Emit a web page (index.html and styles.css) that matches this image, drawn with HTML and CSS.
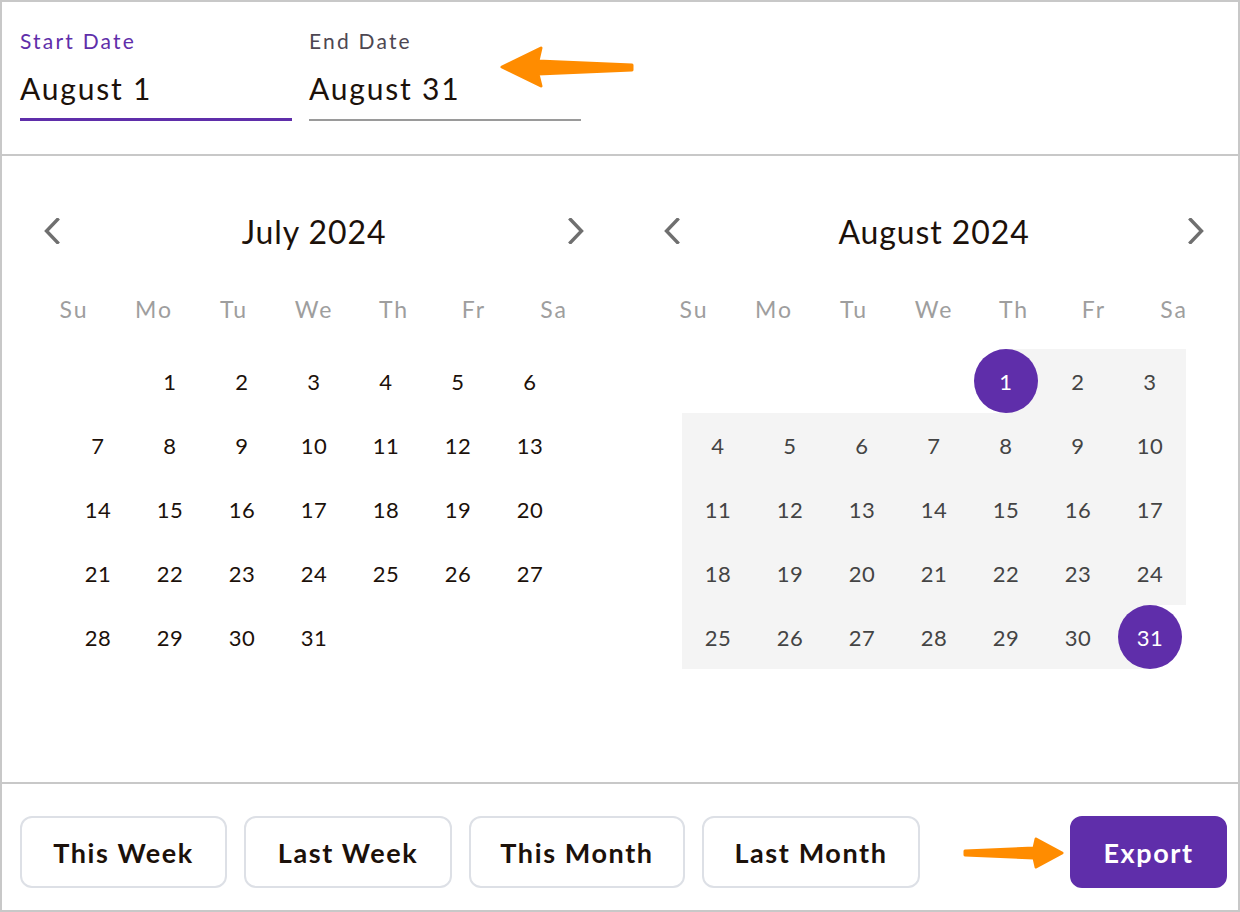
FILE: index.html
```html
<!DOCTYPE html>
<html lang="en">

<head>
    <meta charset="UTF-8">
    <title>Date Range Export</title>
    <link rel="stylesheet" href="styles.css">
</head>

<body>
    <div class="picker">
        <div class="fields">
            <div class="field active">
                <div class="label">Start Date</div>
                <div class="value">August 1</div>
            </div>
            <div class="field">
                <div class="label">End Date</div>
                <div class="value">August 31</div>
            </div>
        </div>

        <div class="calendars">
            <div class="month">
                <div class="month-head">
                    <svg class="chev" width="16" height="26" viewBox="0 0 16 26"><polyline points="13.5,1.5 2.5,13 13.5,24.5" /></svg>
                    <span class="title">July 2024</span>
                    <svg class="chev" width="16" height="26" viewBox="0 0 16 26"><polyline points="2.5,1.5 13.5,13 2.5,24.5" /></svg>
                </div>
                <div class="weekdays">
                    <span>Su</span><span>Mo</span><span>Tu</span><span>We</span><span>Th</span><span>Fr</span><span>Sa</span>
                </div>
                <div class="days">
                    <span class="day"></span>
                    <span class="day">1</span><span class="day">2</span><span class="day">3</span><span class="day">4</span><span class="day">5</span><span class="day">6</span>
                    <span class="day">7</span><span class="day">8</span><span class="day">9</span><span class="day">10</span><span class="day">11</span><span class="day">12</span><span class="day">13</span>
                    <span class="day">14</span><span class="day">15</span><span class="day">16</span><span class="day">17</span><span class="day">18</span><span class="day">19</span><span class="day">20</span>
                    <span class="day">21</span><span class="day">22</span><span class="day">23</span><span class="day">24</span><span class="day">25</span><span class="day">26</span><span class="day">27</span>
                    <span class="day">28</span><span class="day">29</span><span class="day">30</span><span class="day">31</span>
                </div>
            </div>

            <div class="month">
                <div class="month-head">
                    <svg class="chev" width="16" height="26" viewBox="0 0 16 26"><polyline points="13.5,1.5 2.5,13 13.5,24.5" /></svg>
                    <span class="title">August 2024</span>
                    <svg class="chev" width="16" height="26" viewBox="0 0 16 26"><polyline points="2.5,1.5 13.5,13 2.5,24.5" /></svg>
                </div>
                <div class="weekdays">
                    <span>Su</span><span>Mo</span><span>Tu</span><span>We</span><span>Th</span><span>Fr</span><span>Sa</span>
                </div>
                <div class="days">
                    <span class="day"></span><span class="day"></span><span class="day"></span><span class="day"></span>
                    <span class="day range start"><b>1</b></span><span class="day range">2</span><span class="day range">3</span>
                    <span class="day range">4</span><span class="day range">5</span><span class="day range">6</span><span class="day range">7</span><span class="day range">8</span><span class="day range">9</span><span class="day range">10</span>
                    <span class="day range">11</span><span class="day range">12</span><span class="day range">13</span><span class="day range">14</span><span class="day range">15</span><span class="day range">16</span><span class="day range">17</span>
                    <span class="day range">18</span><span class="day range">19</span><span class="day range">20</span><span class="day range">21</span><span class="day range">22</span><span class="day range">23</span><span class="day range">24</span>
                    <span class="day range">25</span><span class="day range">26</span><span class="day range">27</span><span class="day range">28</span><span class="day range">29</span><span class="day range">30</span>
                    <span class="day range end"><b>31</b></span>
                </div>
            </div>
        </div>

        <div class="actions">
            <button class="btn w-207">This Week</button>
            <button class="btn w-208">Last Week</button>
            <button class="btn w-216">This Month</button>
            <button class="btn w-218">Last Month</button>
            <button class="btn export">Export</button>
        </div>

        <!-- annotation arrows -->
        <svg class="arrow arrow-top" width="138" height="44" viewBox="0 0 138 44">
            <polygon points="4,22 43,3 40,16 134,20 134,25 40,29 43,41" />
        </svg>
        <svg class="arrow arrow-bottom" width="104" height="34" viewBox="0 0 104 34">
            <polygon points="3,15 72,12 74,3 100,17 74,31 72,22 3,19" />
        </svg>
    </div>
</body>

</html>
```

FILE: styles.css
```css
* {
    box-sizing: border-box;
}

body {
    margin: 0;
    background: #fff;
    font-family: 'Lato', 'Open Sans', sans-serif;
    color: #1c110a;
}

.picker {
    position: relative;
    width: 1240px;
    height: 912px;
    border: 2px solid #c8c8c8;
    display: flex;
    flex-direction: column;
}

/* date inputs */
.fields {
    height: 154px;
    flex-shrink: 0;
    display: flex;
    align-items: flex-start;
    gap: 17px;
    padding: 27px 18px 0;
    border-bottom: 2px solid #c8c8c8;
}

.field {
    width: 272px;
    padding-bottom: 13px;
    border-bottom: 2px solid #9a9a9a;
}

.field.active {
    padding-bottom: 12px;
    border-bottom: 3px solid #5f2eaa;
}

.label {
    font-size: 21px;
    line-height: 24px;
    letter-spacing: 2.2px;
    color: #4d4752;
}

.field.active .label {
    color: #5f2eaa;
}

.value {
    margin-top: 17px;
    font-size: 30px;
    line-height: 36px;
    letter-spacing: 1.8px;
    color: #1c110a;
}

/* calendars */
.calendars {
    flex: 1;
    display: flex;
    gap: 20px;
    padding: 40px 0 0 12px;
    border-bottom: 2px solid #c8c8c8;
}

.month {
    width: 600px;
}

.month-head {
    height: 70px;
    display: flex;
    align-items: center;
    justify-content: space-between;
    padding: 0 30px;
}

.chev polyline {
    fill: none;
    stroke: #6f6f6f;
    stroke-width: 3.4;
    stroke-linecap: square;
}

.title {
    font-size: 32px;
    letter-spacing: 0.9px;
    color: #1c110a;
}

.weekdays {
    display: grid;
    grid-template-columns: repeat(7, 80px);
    margin: 21px 20px 0;
    height: 44px;
    line-height: 44px;
    text-align: center;
    font-size: 23px;
    letter-spacing: 2px;
    color: #9e9e9e;
}

.days {
    display: grid;
    grid-template-columns: repeat(7, 72px);
    grid-auto-rows: 64px;
    margin: 18px 48px 0;
}

.day {
    display: flex;
    align-items: center;
    justify-content: center;
    font-size: 22px;
    letter-spacing: 0.5px;
    color: #1c110a;
}

.day.range {
    background: #f4f4f4;
    color: #444;
}

.day.start {
    background: linear-gradient(to right, transparent 50%, #f4f4f4 50%);
}

.day.end {
    background: linear-gradient(to right, #f4f4f4 50%, transparent 50%);
}

.day b {
    width: 64px;
    height: 64px;
    border-radius: 50%;
    background: #5f2eaa;
    color: #fff;
    font-weight: 400;
    display: flex;
    align-items: center;
    justify-content: center;
}

/* bottom buttons */
.actions {
    height: 126px;
    flex-shrink: 0;
    display: flex;
    align-items: flex-start;
    gap: 17px;
    padding: 32px 11px 0 18px;
}

.btn {
    height: 72px;
    padding: 0;
    border: 2px solid #dde0e6;
    border-radius: 12px;
    background: #fff;
    font-family: 'Lato', 'Open Sans', sans-serif;
    font-weight: 700;
    font-size: 27px;
    letter-spacing: 1.6px;
    color: #1c110a;
}

.w-207 { width: 207px; }
.w-208 { width: 208px; }
.w-216 { width: 216px; }
.w-218 { width: 218px; }

.btn.export {
    width: 157px;
    margin-left: auto;
    background: #5f2eaa;
    border-color: #5f2eaa;
    color: #fff;
}

/* annotation arrows */
.arrow {
    position: absolute;
}

.arrow polygon {
    fill: #ff8c00;
    stroke: #ff8c00;
    stroke-width: 3;
    stroke-linejoin: round;
}

.arrow-top {
    left: 496px;
    top: 43px;
}

.arrow-bottom {
    left: 960px;
    top: 834px;
}
```
